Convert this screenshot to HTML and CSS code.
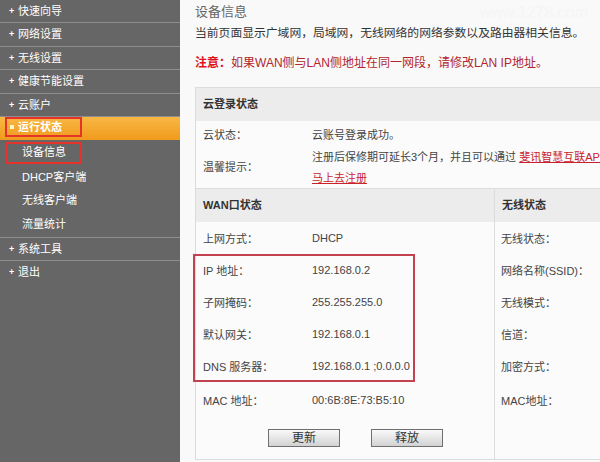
FILE: index.html
```html
<!DOCTYPE html>
<html lang="zh-CN">
	<head>
		<meta charset="UTF-8" />
		<title>设备信息</title>
		<link rel="stylesheet" href="styles.css">
	</head>
	<body>
		<div class="page">
			<nav class="side">
				<div class="item">快速向导</div>
				<div class="item">网络设置</div>
				<div class="item">无线设置</div>
				<div class="item">健康节能设置</div>
				<div class="item">云账户</div>
				<div class="cur"><span class="mark">运行状态</span></div>
				<div class="subs">
					<div class="sub"><span class="mark">设备信息</span></div>
					<div class="sub">DHCP客户端</div>
					<div class="sub">无线客户端</div>
					<div class="sub">流量统计</div>
				</div>
				<div class="item">系统工具</div>
				<div class="item last">退出</div>
			</nav>

			<main class="main">
				<div class="wm">www.1278.com</div>
				<h2 class="title">设备信息</h2>
				<p class="desc">当前页面显示广域网，局域网，无线网络的网络参数以及路由器相关信息。</p>
				<p class="note"><b>注意：</b>如果WAN侧与LAN侧地址在同一网段，请修改LAN IP地址。</p>

				<div class="panel">
					<div class="head">云登录状态</div>
					<div class="row r1">
						<span class="lab">云状态：</span>
						<span class="val">云账号登录成功。</span>
					</div>
					<div class="row r2">
						<span class="lab">温馨提示：</span>
						<span class="val">注册后保修期可延长3个月，并且可以通过 <a href="#">斐讯智慧互联APP注册云账户，</a><br><a href="#">马上去注册</a></span>
					</div>

					<div class="cols">
						<div class="wan">
							<div class="head">WAN口状态</div>
							<div class="row"><span class="lab">上网方式：</span><span class="val">DHCP</span></div>
							<div class="hl">
								<div class="row"><span class="lab">IP 地址：</span><span class="val">192.168.0.2</span></div>
								<div class="row"><span class="lab">子网掩码：</span><span class="val">255.255.255.0</span></div>
								<div class="row"><span class="lab">默认网关：</span><span class="val">192.168.0.1</span></div>
								<div class="row"><span class="lab">DNS 服务器：</span><span class="val">192.168.0.1 ;0.0.0.0</span></div>
							</div>
							<div class="row mac"><span class="lab">MAC 地址：</span><span class="val">00:6B:8E:73:B5:10</span></div>
							<div class="btns">
								<button>更新</button>
								<button>释放</button>
							</div>
						</div>
						<div class="wifi">
							<div class="head">无线状态</div>
							<div class="row"><span class="lab">无线状态：</span></div>
							<div class="row"><span class="lab">网络名称(SSID)：</span></div>
							<div class="row"><span class="lab">无线模式：</span></div>
							<div class="row"><span class="lab">信道：</span></div>
							<div class="row"><span class="lab">加密方式：</span></div>
							<div class="row mac"><span class="lab">MAC地址：</span></div>
						</div>
					</div>
				</div>
			</main>
		</div>
	</body>
</html>
```

FILE: styles.css
```css
* {
	margin: 0;
	padding: 0;
	box-sizing: border-box;
}
body {
	background-color: #f9f9f9;
	color: #444;
	font-family: "Liberation Sans", "Noto Sans CJK SC", sans-serif;
	font-size: 11px;
	overflow: hidden;
}
.page {
	display: flex;
	height: 462px;
}

/* left menu */
.side {
	width: 180px;
	flex: none;
	background-color: #666;
	color: #fff;

	.item {
		height: 23.4px;
		line-height: 22px;
		padding-left: 18px;
		border-bottom: 1px solid #8d8d8d;
		position: relative;
	}
	.item::before {
		content: "+";
		position: absolute;
		left: 9px;
		top: 0;
		font-size: 9px;
		font-weight: bold;
	}
	.item.last {
		border-bottom: none;
	}
	.cur {
		height: 23px;
		background: linear-gradient(#f8b844, #f09a1c);
		font-weight: bold;

		.mark {
			padding-left: 13px;
			height: 20px;
			line-height: 20px;
			position: relative;
		}
		.mark::before {
			content: "";
			position: absolute;
			left: 5px;
			top: 8px;
			width: 4px;
			height: 4px;
			background-color: #fff6c8;
		}
	}
	.subs {
		border-bottom: 1px solid #8d8d8d;
	}
	.sub {
		height: 23.75px;
		line-height: 23px;
		padding-left: 22px;

		.mark {
			margin-top: 2px;
			padding-left: 17px;
			height: 22px;
			line-height: 20px;
		}
	}
	.mark {
		display: block;
		margin-left: 5px;
		width: 77px;
		outline: 2px solid #e5332b;
		outline-offset: -2px;
	}
	.sub:first-child {
		padding-left: 0;
	}
}

/* content */
.main {
	flex: 1;
	min-width: 0;
	padding-left: 15px;
	overflow: hidden;
	position: relative;

	.wm {
		position: absolute;
		right: 12px;
		top: 4px;
		font-size: 16px;
		color: #f5f5f5;
	}
	.title {
		height: 24px;
		line-height: 24px;
		font-size: 13px;
		font-weight: normal;
		color: #666;
	}
	.desc {
		line-height: 18px;
		font-size: 11.8px;
		color: #333;
	}
	.note {
		margin-top: 12px;
		line-height: 18px;
		font-size: 12px;
		color: #b3262e;

		b {
			color: #e0101c;
		}
	}
}

.panel {
	margin-top: 15px;
	width: 500px;
	border: 1px solid #dcdcdc;
	background-color: #fbfbfb;
	white-space: nowrap;

	.head {
		height: 33px;
		line-height: 33px;
		padding-left: 7px;
		background-color: #ececec;
		color: #333;
		font-weight: bold;
	}
	.row {
		display: flex;
		height: 32px;
		align-items: center;
		padding-left: 7px;
	}
	.lab {
		width: 109px;
		flex: none;
	}
	.r1 {
		height: 26px;
	}
	.r2 {
		height: 41px;
		line-height: 21px;

		a {
			color: #c8232c;
		}
	}
	.cols {
		display: flex;
		border-top: 1px solid #dcdcdc;
	}
	.cols .head {
		height: 33px;
	}
	.wan {
		width: 299px;
		flex: none;
		border-right: 1px solid #dcdcdc;
	}
	.wifi {
		flex: 1;

		.row {
			padding-left: 6px;
		}
	}
	.hl {
		margin-left: -3px;
		width: 222px;
		outline: 2px solid #c2434f;
		outline-offset: -2px;

		.row {
			padding-left: 10px;
		}
	}
	.mac {
		height: 36px;
	}
	.btns {
		display: flex;
		gap: 31px;
		padding: 11px 0 12px 72px;

		button {
			width: 72px;
			height: 18px;
			border: 1px solid #6f6f6f;
			background: linear-gradient(#fafafa, #d2d2d2);
			font-family: "Liberation Sans", "Noto Sans CJK SC", sans-serif;
			font-size: 12px;
			color: #333;
			line-height: 16px;
		}
	}
}
```
